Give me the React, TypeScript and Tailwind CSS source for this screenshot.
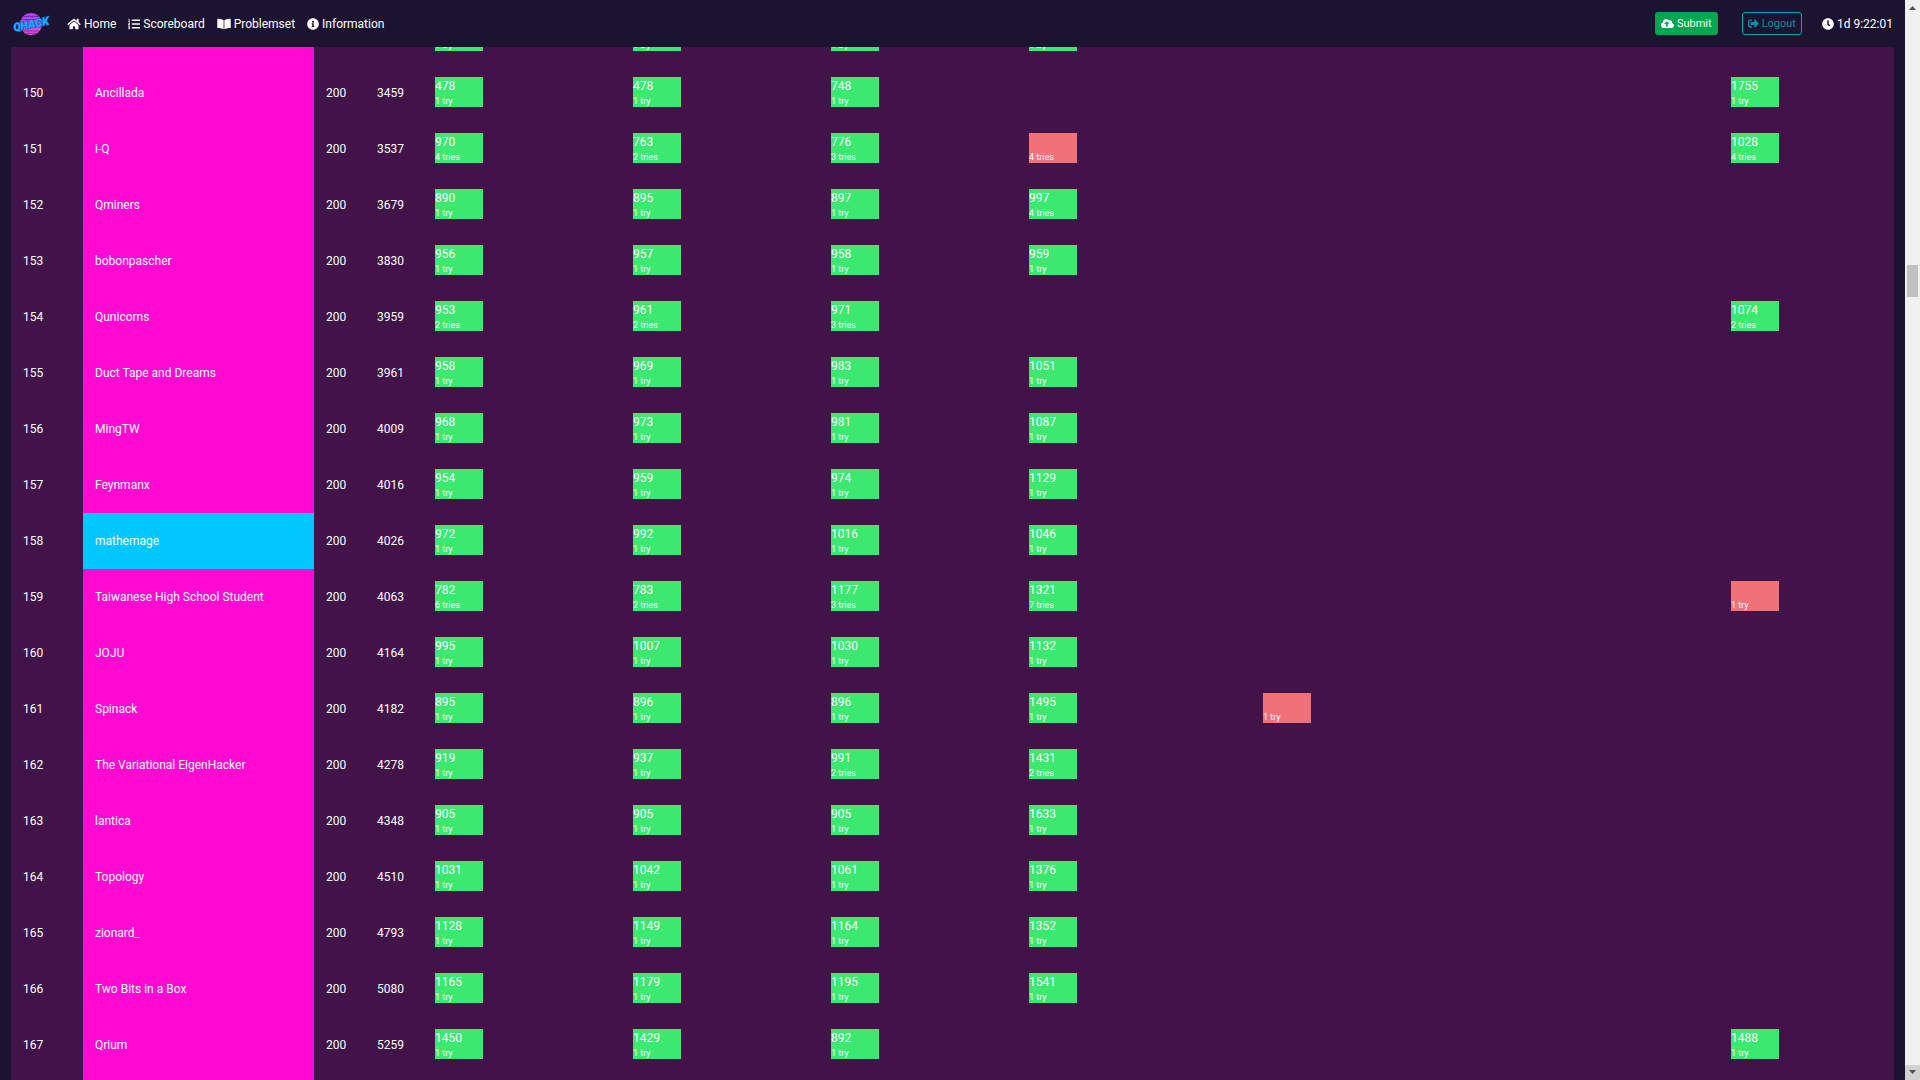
import { FaHome, FaListOl, FaBookOpen, FaInfoCircle, FaCloudUploadAlt, FaSignOutAlt, FaClock } from "react-icons/fa";

type Attempt = { time?: number; tries: number } | null;
type Team = { rank?: number; name?: string; score?: number; penalty?: number; attempts: Attempt[]; own?: boolean };

const ok = (time: number | undefined, tries = 1): Attempt => ({ time: time ?? NaN, tries });
const fail = (tries: number): Attempt => ({ tries });
const team = (rank: number, name: string, penalty: number, attempts: Attempt[], own = false): Team => ({
  rank, name, score: 200, penalty, attempts, own,
});

const teams: Team[] = [
  { attempts: [ok(undefined), ok(undefined), ok(undefined), ok(undefined)] },
  team(150, "Ancillada", 3459, [ok(478), ok(478), ok(748), null, null, null, ok(1755)]),
  team(151, "i-Q", 3537, [ok(970, 4), ok(763, 2), ok(776, 3), fail(4), null, null, ok(1028, 4)]),
  team(152, "Qminers", 3679, [ok(890), ok(895), ok(897), ok(997, 4)]),
  team(153, "bobonpascher", 3830, [ok(956), ok(957), ok(958), ok(959)]),
  team(154, "Qunicorns", 3959, [ok(953, 2), ok(961, 2), ok(971, 3), null, null, null, ok(1074, 2)]),
  team(155, "Duct Tape and Dreams", 3961, [ok(958), ok(969), ok(983), ok(1051)]),
  team(156, "MingTW", 4009, [ok(968), ok(973), ok(981), ok(1087)]),
  team(157, "Feynmanx", 4016, [ok(954), ok(959), ok(974), ok(1129)]),
  team(158, "mathemage", 4026, [ok(972), ok(992), ok(1016), ok(1046)], true),
  team(159, "Taiwanese High School Student", 4063, [ok(782, 6), ok(783, 2), ok(1177, 3), ok(1321, 7), null, null, fail(1)]),
  team(160, "JOJU", 4164, [ok(995), ok(1007), ok(1030), ok(1132)]),
  team(161, "Spinack", 4182, [ok(895), ok(896), ok(896), ok(1495), fail(1)]),
  team(162, "The Variational EigenHacker", 4278, [ok(919), ok(937), ok(991, 2), ok(1431, 2)]),
  team(163, "lantica", 4348, [ok(905), ok(905), ok(905), ok(1633)]),
  team(164, "Topology", 4510, [ok(1031), ok(1042), ok(1061), ok(1376)]),
  team(165, "zionard_", 4793, [ok(1128), ok(1149), ok(1164), ok(1352)]),
  team(166, "Two Bits in a Box", 5080, [ok(1165), ok(1179), ok(1195), ok(1541)]),
  team(167, "Qrium", 5259, [ok(1450), ok(1429), ok(892), null, null, null, ok(1488)]),
  { attempts: [] },
];

const problems = [0, 1, 2, 3, 4, 5, 6];

function Logo() {
  return (
    <svg viewBox="0 0 36 24" className="h-6 w-9 overflow-visible">
      <defs>
        <linearGradient id="sun" x1="0" y1="0" x2="0" y2="1">
          <stop offset="0" stopColor="#a044f5" />
          <stop offset="1" stopColor="#f04fd8" />
        </linearGradient>
      </defs>
      <circle cx="19" cy="12" r="11" fill="url(#sun)" />
      <path d="M10 4.5h18M9 7.5h20M11 19h16M14 21.3h10" stroke="#5a2490" strokeWidth=".7" />
      <text
        x="19"
        y="16"
        textAnchor="middle"
        transform="rotate(-11 19 12)"
        fontSize="11"
        fontWeight="800"
        fontStyle="italic"
        fill="#12b4fa"
        stroke="#2350c0"
        strokeWidth="1.4"
        paintOrder="stroke"
      >
        QHACK
      </text>
    </svg>
  );
}

function Tile({ attempt }: { attempt: Attempt }) {
  if (!attempt) return null;
  const solved = attempt.time !== undefined;
  return (
    <div className={`w-12 ${solved ? "bg-[#3be870]" : "bg-[#f07178]"}`}>
      <div className="h-[18px] leading-[18px]">{attempt.time || ""}</div>
      <div className="h-3 text-[9px] leading-3">
        {`${attempt.tries} ${attempt.tries === 1 ? "try" : "tries"}`}
      </div>
    </div>
  );
}

export default function App() {
  return (
    <div className="flex h-screen overflow-hidden bg-[#1b1330] font-['Roboto',sans-serif] text-xs leading-[18px] text-white">
      <div className="flex min-w-0 flex-1 flex-col">
        <header className="flex h-[47px] shrink-0 items-center px-3">
          <a href="#" className="mr-[19px]"><Logo /></a>
          <nav className="flex items-center gap-3">
            <a href="#" className="flex items-center gap-[3px]"><FaHome className="h-3 w-[14px]" />Home</a>
            <a href="#" className="flex items-center gap-[3px]"><FaListOl className="size-3" />Scoreboard</a>
            <a href="#" className="flex items-center gap-[3px]"><FaBookOpen className="h-3 w-[14px]" />Problemset</a>
            <a href="#" className="flex items-center gap-[3px]"><FaInfoCircle className="size-3" />Information</a>
          </nav>
          <div className="ml-auto flex items-center">
            <button className="flex h-[23px] items-center gap-[3px] rounded-[3px] bg-[#00a651] px-[6px] text-[11px]">
              <FaCloudUploadAlt className="h-[11px] w-[13px]" />Submit
            </button>
            <button className="ml-6 flex h-[23px] items-center gap-[3px] rounded-[3px] border border-[#00a5bb] px-[5px] text-[11px] text-[#0093a7]">
              <FaSignOutAlt className="size-[11px]" />Logout
            </button>
            <div className="ml-5 flex items-center gap-[3px]"><FaClock className="size-3" />1d 9:22:01</div>
          </div>
        </header>
        <main className="min-h-0 flex-1 overflow-hidden px-[11px]">
          <table className="-mt-[38px] w-full table-fixed border-collapse bg-[#421348]">
            <colgroup>
              <col className="w-[72px]" />
              <col className="w-[231px]" />
              <col className="w-[51px]" />
              <col className="w-[58px]" />
              <col className="w-[198px]" />
              <col className="w-[198px]" />
              <col className="w-[198px]" />
              <col className="w-[234px]" />
              <col className="w-[234px]" />
              <col className="w-[234px]" />
              <col />
            </colgroup>
            <tbody>
              {teams.map((t, i) => (
                <tr key={i} className="h-14">
                  <td className="px-3">{t.rank}</td>
                  <td className={`px-3 ${t.own ? "bg-[#00c8ff]" : "bg-[#ff0ad2]"}`}>{t.name}</td>
                  <td className="px-3">{t.score}</td>
                  <td className="px-3">{t.penalty}</td>
                  {problems.map((p) => (
                    <td key={p} className="px-3 pt-3 align-top"><Tile attempt={t.attempts[p] ?? null} /></td>
                  ))}
                </tr>
              ))}
            </tbody>
          </table>
        </main>
      </div>
      <div className="flex w-[15px] shrink-0 flex-col bg-[#f1f1f1]">
        <svg viewBox="0 0 15 15" className="size-[15px]"><path d="M4 10l3.5-4 3.5 4z" fill="#505050" /></svg>
        <div className="mx-[2px] mt-[250px] h-8 bg-[#c1c1c1]" />
        <svg viewBox="0 0 15 15" className="mt-auto size-[15px] bg-[#d2d2d2]"><path d="M4 5l3.5 4 3.5-4z" fill="#505050" /></svg>
      </div>
    </div>
  );
}
